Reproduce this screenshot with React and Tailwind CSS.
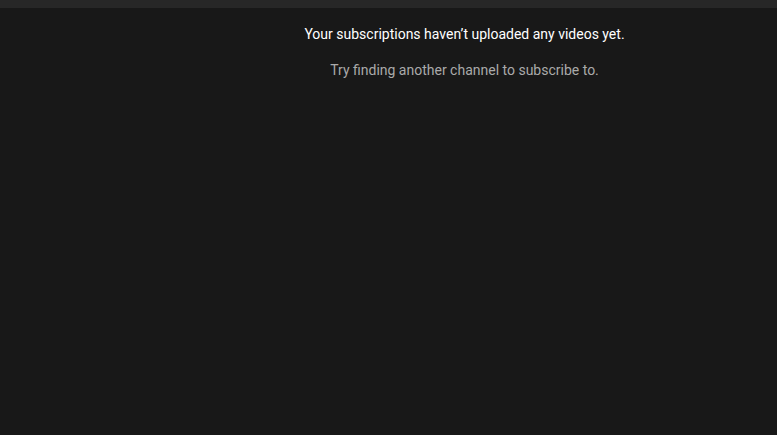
import React from 'react';

const App = () => {
  return (
    <div className="w-[777px] h-[435px] bg-[#181818] flex flex-col overflow-hidden" style={{ fontFamily: 'Roboto, "Liberation Sans", sans-serif' }}>
      {/* header strip */}
      <div className="h-2 bg-[#272727]" />

      <div className="flex flex-1">
        <div className="w-[152px] shrink-0" />
        <div className="flex-1 flex flex-col items-center pt-4">
          <p className="text-[14px] leading-5 text-white">Your subscriptions haven’t uploaded any videos yet.</p>
          <p className="mt-4 text-[14px] leading-5 text-[#aaaaaa]">Try finding another channel to subscribe to.</p>
        </div>
      </div>
    </div>
  );
};

export default App;
